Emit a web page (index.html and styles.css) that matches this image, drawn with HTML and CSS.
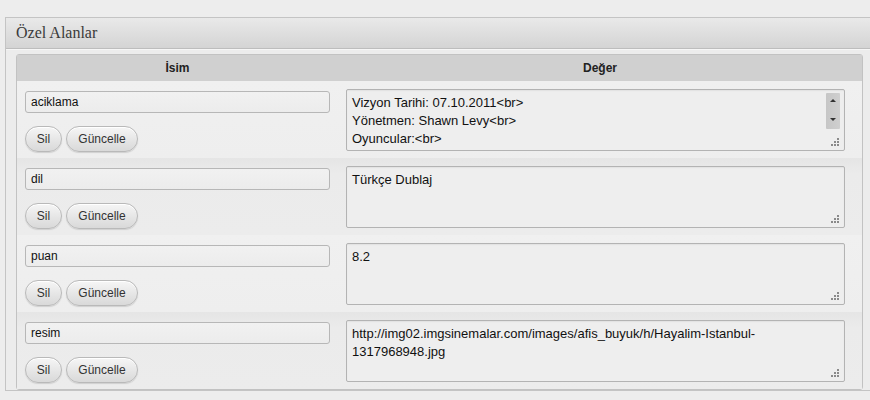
FILE: index.html
```html
<!DOCTYPE html>
<html lang="tr">
<head>
<meta charset="utf-8">
<title>Özel Alanlar</title>
<link rel="stylesheet" href="styles.css">
</head>
<body>
<div class="panel">
  <div class="panel-head"><h3 class="panel-title">Özel Alanlar</h3></div>
  <div class="panel-body">
    <div class="table">
      <div class="thead">
        <div class="th th-name">İsim</div>
        <div class="th th-value">Değer</div>
      </div>

      <div class="row">
        <div class="cell-name">
          <div class="input">aciklama</div>
          <div class="btns"><span class="btn btn-sil">Sil</span><span class="btn btn-upd">Güncelle</span></div>
        </div>
        <div class="cell-value">
          <div class="textarea">Vizyon Tarihi: 07.10.2011&lt;br&gt;<br>Yönetmen: Shawn Levy&lt;br&gt;<br>Oyuncular:&lt;br&gt;
            <div class="scrollbar"><span class="arr-up"></span><span class="arr-down"></span></div>
            <svg class="grip" width="10" height="10" viewBox="0 0 10 10"><rect x="7" y="1" width="2" height="2"/><rect x="4" y="4" width="2" height="2"/><rect x="7" y="4" width="2" height="2"/><rect x="1" y="7" width="2" height="2"/><rect x="4" y="7" width="2" height="2"/><rect x="7" y="7" width="2" height="2"/></svg>
          </div>
        </div>
      </div>

      <div class="row">
        <div class="cell-name">
          <div class="input">dil</div>
          <div class="btns"><span class="btn btn-sil">Sil</span><span class="btn btn-upd">Güncelle</span></div>
        </div>
        <div class="cell-value">
          <div class="textarea">Türkçe Dublaj
            <svg class="grip" width="10" height="10" viewBox="0 0 10 10"><rect x="7" y="1" width="2" height="2"/><rect x="4" y="4" width="2" height="2"/><rect x="7" y="4" width="2" height="2"/><rect x="1" y="7" width="2" height="2"/><rect x="4" y="7" width="2" height="2"/><rect x="7" y="7" width="2" height="2"/></svg>
          </div>
        </div>
      </div>

      <div class="row">
        <div class="cell-name">
          <div class="input">puan</div>
          <div class="btns"><span class="btn btn-sil">Sil</span><span class="btn btn-upd">Güncelle</span></div>
        </div>
        <div class="cell-value">
          <div class="textarea">8.2
            <svg class="grip" width="10" height="10" viewBox="0 0 10 10"><rect x="7" y="1" width="2" height="2"/><rect x="4" y="4" width="2" height="2"/><rect x="7" y="4" width="2" height="2"/><rect x="1" y="7" width="2" height="2"/><rect x="4" y="7" width="2" height="2"/><rect x="7" y="7" width="2" height="2"/></svg>
          </div>
        </div>
      </div>

      <div class="row">
        <div class="cell-name">
          <div class="input">resim</div>
          <div class="btns"><span class="btn btn-sil">Sil</span><span class="btn btn-upd">Güncelle</span></div>
        </div>
        <div class="cell-value">
          <div class="textarea">http://img02.imgsinemalar.com/images/afis_buyuk/h/Hayalim-Istanbul-<br>1317968948.jpg
            <svg class="grip" width="10" height="10" viewBox="0 0 10 10"><rect x="7" y="1" width="2" height="2"/><rect x="4" y="4" width="2" height="2"/><rect x="7" y="4" width="2" height="2"/><rect x="1" y="7" width="2" height="2"/><rect x="4" y="7" width="2" height="2"/><rect x="7" y="7" width="2" height="2"/></svg>
          </div>
        </div>
      </div>
    </div>
  </div>
</div>
</body>
</html>
```

FILE: styles.css
```css
html, body {
  margin: 0;
  padding: 0;
  background: #ededed;
  font-family: "Liberation Sans", Arial, sans-serif;
  font-size: 12px;
  color: #222;
  overflow: hidden;
}

.panel {
  margin: 17px 0 0 5px;
  border: 1px solid #c4c4c4;
  border-right: none;
  background: #ececec;
}

.panel-head {
  height: 30px;
  background: linear-gradient(#e9e9e9, #d4d4d4);
  border-bottom: 1px solid #bdbdbd;
  box-shadow: 0 1px 0 #f6f6f6;
  display: flex;
  align-items: center;
}

.panel-title {
  margin: 0 0 0 10px;
  font-family: "Liberation Serif", "DejaVu Serif", serif;
  font-weight: normal;
  font-size: 16px;
  color: #3a3a3a;
}

.panel-body {
  padding: 5px 0 0 10px;
}

.table {
  width: 845px;
  border: 1px solid #c2c2c2;
  border-radius: 3px;
  background: #efefef;
  box-shadow: inset 1px 1px 0 #f8f8f8;
}

.thead {
  display: grid;
  grid-template-columns: 321px 1fr;
  height: 26px;
  background: #d0d0d0;
  font-weight: bold;
  color: #222;
}

.th {
  display: flex;
  align-items: center;
  justify-content: center;
}

.row {
  display: grid;
  grid-template-columns: 321px 1fr;
  height: 77px;
  background: linear-gradient(#f0f0f0, #eeeeee);
}

.row:nth-child(odd) {
  background: linear-gradient(#e5e5e5, #ebebeb 20%, #ececec);
}

.cell-name {
  padding: 10px 0 0 8px;
}

.input {
  width: 293px;
  height: 20px;
  border: 1px solid #b7b7b7;
  border-radius: 3px;
  background: linear-gradient(#f1f1f1, #ececec);
  padding: 0 5px;
  line-height: 20px;
  color: #111;
}

.btns {
  display: flex;
  gap: 4px;
  margin-top: 13px;
}

.btn {
  height: 24px;
  border: 1px solid #b9b9b9;
  border-radius: 13px;
  background: linear-gradient(#f6f6f6, #e4e4e4 60%, #d9d9d9);
  box-shadow: inset 0 1px 0 #fff, 0 1px 1px #d0d0d0;
  display: flex;
  align-items: center;
  justify-content: center;
  color: #333;
}

.btn-sil { width: 35px; }
.btn-upd { width: 70px; }

.cell-value {
  padding: 8px 0 0 8px;
}

.textarea {
  position: relative;
  width: 488px;
  height: 52px;
  border: 1px solid #b3b3b3;
  border-radius: 2px;
  background: #eeeeee;
  box-shadow: inset 0 1px 1px #e2e2e2;
  padding: 4px 4px 4px 5px;
  font-size: 13px;
  line-height: 18px;
  color: #111;
}

.scrollbar {
  position: absolute;
  right: 4px;
  top: 3px;
  width: 14px;
  height: 36px;
  background: linear-gradient(90deg, #c6c6c6, #cfcfcf);
  border-radius: 1px;
}

.arr-up, .arr-down {
  position: absolute;
  left: 4px;
  width: 0;
  height: 0;
  border-left: 3px solid transparent;
  border-right: 3px solid transparent;
}

.arr-up {
  top: 6px;
  border-bottom: 3px solid #333;
}

.arr-down {
  bottom: 8px;
  border-top: 3px solid #333;
}

.grip {
  position: absolute;
  right: 4px;
  bottom: 3px;
  fill: #8a8a8a;
}
```
